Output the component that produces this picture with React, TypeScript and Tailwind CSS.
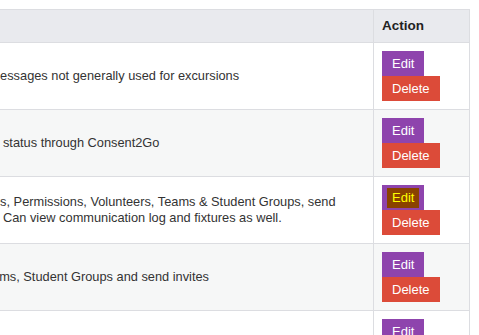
// Permissions table, cropped view (description column runs off the left edge)

interface RoleRow {
  description: string
  highlightEdit?: boolean
}

const rows: RoleRow[] = [
  { description: 'Send messages not generally used for excursions' },
  { description: 'Get live status through Consent2Go' },
  {
    description:
      'Activities, Permissions, Volunteers, Teams & Student Groups, send reports. Can view communication log and fixtures as well.',
    highlightEdit: true,
  },
  { description: 'Set Teams, Student Groups and send invites' },
  { description: 'Read only access to messages and fixtures' },
]

function ActionButtons({ highlight }: { highlight?: boolean }) {
  return (
    <div className="flex flex-col items-start">
      <button className="h-[25px] bg-[#8e44ad] px-[10px] text-[13px] leading-[25px] text-white">
        {highlight ? (
          <span className="-mx-[5px] inline-block bg-[#8a4200] px-[5px] leading-[20px] text-[#ffff00]">Edit</span>
        ) : (
          'Edit'
        )}
      </button>
      <button className="h-[25px] bg-[#dc4b39] px-[10px] text-[13px] leading-[25px] text-white">Delete</button>
    </div>
  )
}

export default function App() {
  return (
    <div
      className="h-[335px] w-[479px] overflow-hidden bg-white pt-[9px] text-[#333]"
      style={{ fontFamily: '"Liberation Sans", Arial, sans-serif' }}
    >
      <div className="-ml-[53px] w-[523px] border border-[#dcdde1]">
        {/* Header */}
        <div className="grid grid-cols-[426px_95px] bg-[#e9eaee]">
          <div className="border-r border-[#dcdde1]" />
          <div className="px-2 py-2 text-[13.5px] font-bold leading-4 text-[#222]">Action</div>
        </div>

        {rows.map((row, i) => (
          <div
            key={i}
            className={`grid grid-cols-[426px_95px] border-t border-[#dcdde1] ${i % 2 === 1 ? 'bg-[#f6f7f7]' : 'bg-white'}`}
          >
            <div className="flex items-center border-r border-[#dcdde1] py-2 pl-2 pr-2 text-[12.8px] leading-4">
              <p>{row.description}</p>
            </div>
            <div className="p-2">
              <ActionButtons highlight={row.highlightEdit} />
            </div>
          </div>
        ))}
      </div>
    </div>
  )
}
